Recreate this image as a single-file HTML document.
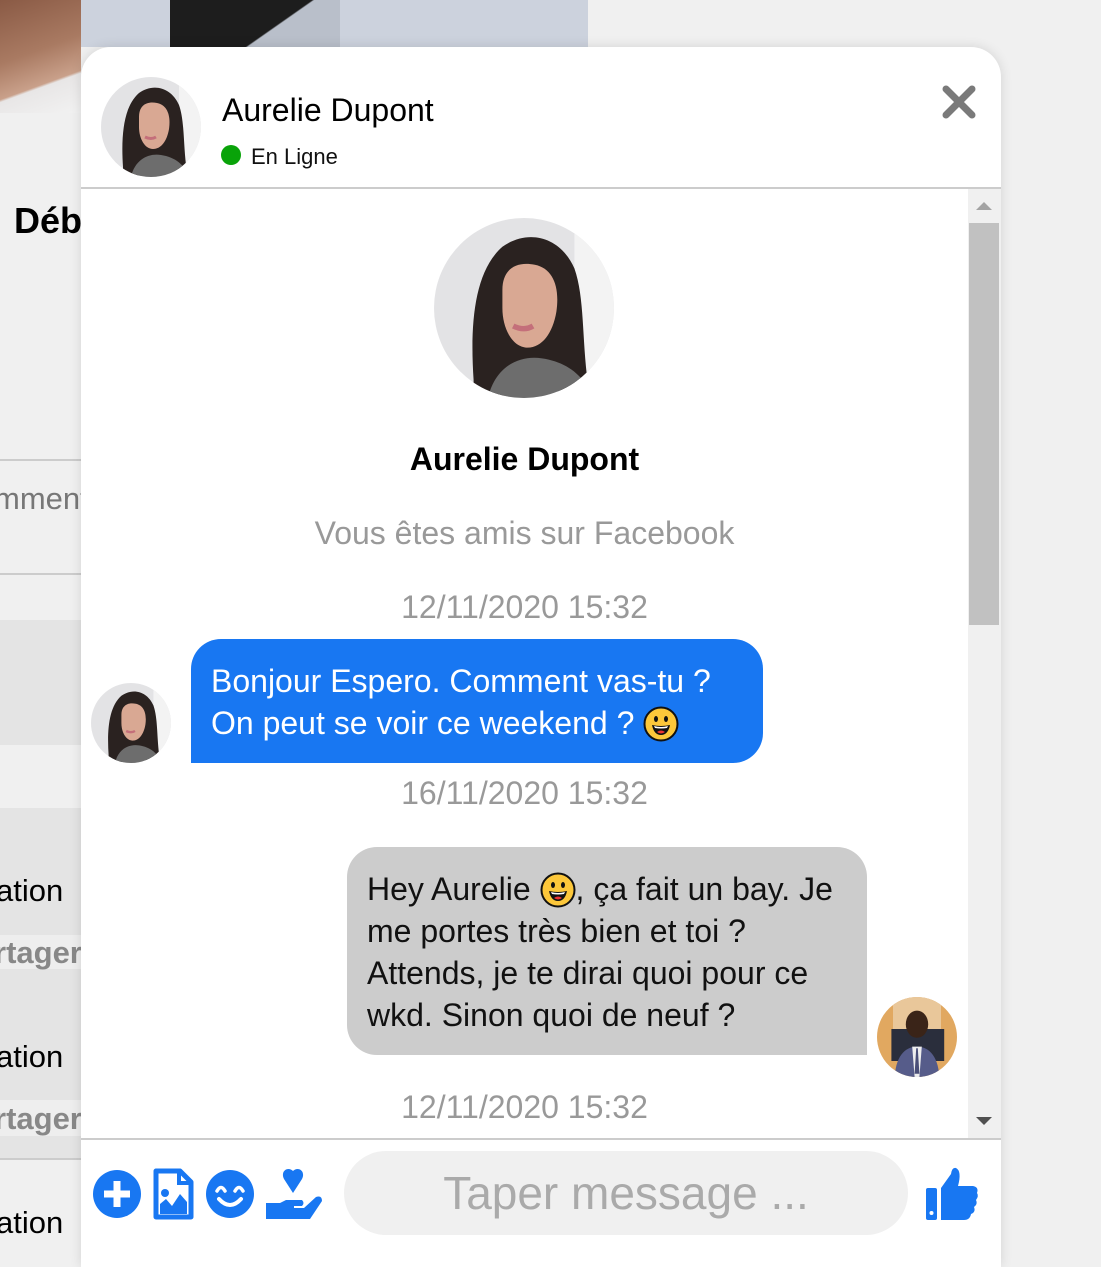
<!DOCTYPE html>
<html><head><meta charset="utf-8"><style>
*{margin:0;padding:0;box-sizing:border-box}
body{width:1101px;height:1247px;overflow:hidden;background:#f0f0f0;font-family:"Liberation Sans",Arial,sans-serif;position:relative}
.a{position:absolute}
.t{position:absolute;white-space:nowrap}
.c{text-align:center;left:81px;width:887px}
.bub{position:absolute;font-size:32px;line-height:42px;padding:21px 20px}
.emo{display:inline-block;vertical-align:-8px;width:36px;height:36px}
</style></head><body>
<div class="a" style="left:0;top:0;width:81px;height:113px;background:linear-gradient(160deg,#8a5a45 0%,#a97a62 45%,#c9a08a 70%,#e8e6e6 72%,#f2f2f2 100%)"></div>
<div class="a" style="left:81px;top:0;width:507px;height:47px;background:#ccd2dd"></div>
<div class="a" style="left:170px;top:0;width:170px;height:47px;background:linear-gradient(145deg,#1d1d1d 0 60%,#b9bfca 61%)"></div>
<div class="t" style="left:14px;top:200px;font-size:36px;font-weight:bold;color:#000">Déb</div>
<div class="a" style="left:0;top:459px;width:81px;height:2px;background:#ccc"></div>
<div class="t" style="left:-6px;top:481px;font-size:31px;color:#777">mmente</div>
<div class="a" style="left:0;top:573px;width:81px;height:2px;background:#ccc"></div>
<div class="a" style="left:0;top:620px;width:81px;height:125px;background:#e4e4e4"></div>
<div class="a" style="left:0;top:808px;width:81px;height:350px;background:#e4e4e4"></div>
<div class="a" style="left:0;top:935px;width:81px;height:34px;background:#eeeeee"></div>
<div class="a" style="left:0;top:1100px;width:81px;height:36px;background:#eeeeee"></div>
<div class="a" style="left:0;top:1158px;width:81px;height:2px;background:#ccc"></div>
<div class="t" style="left:-4px;top:873px;font-size:31px;color:#000">ation</div>
<div class="t" style="left:-6px;top:935px;font-size:31px;font-weight:bold;color:#888">rtager</div>
<div class="t" style="left:-4px;top:1039px;font-size:31px;color:#000">ation</div>
<div class="t" style="left:-6px;top:1101px;font-size:31px;font-weight:bold;color:#888">rtager</div>
<div class="t" style="left:-4px;top:1205px;font-size:31px;color:#000">ation</div>

<div class="a" style="left:81px;top:47px;width:920px;height:1220px;background:#fff;border-radius:30px 30px 0 0;box-shadow:0 0 12px rgba(0,0,0,.12)"></div>
<div class="a" style="left:81px;top:187px;width:920px;height:2px;background:#ccc"></div>

<svg width="0" height="0" style="position:absolute"><defs>
<clipPath id="cc2"><circle cx="50" cy="50" r="50"/></clipPath>
<symbol id="girl" viewBox="0 0 100 100"><g clip-path="url(#cc2)"><rect width="100" height="100" fill="#e3e3e5"/><rect x="78" width="22" height="100" fill="#f3f3f3"/>
<path d="M22 90 C20 60 22 30 38 16 C52 6 70 10 78 28 C84 45 82 70 86 95 L22 100Z" fill="#2a2220"/>
<path d="M38 40 C38 28 46 24 56 26 C66 28 70 38 68 52 C66 64 60 72 52 72 C44 72 38 62 38 50Z" fill="#d9a893"/>
<path d="M44 60 Q50 63 55 60" stroke="#c46f7a" stroke-width="3" fill="none"/>
<path d="M30 100 C34 82 48 76 60 78 C74 80 84 88 88 100Z" fill="#6d6d6d"/></g></symbol>
<symbol id="man" viewBox="0 0 100 100"><g clip-path="url(#cc2)"><rect width="100" height="100" fill="#e1a860"/><rect x="20" y="0" width="60" height="60" fill="#e9c79a"/><rect x="18" y="40" width="66" height="40" fill="#2a2e3c"/>
<ellipse cx="50" cy="34" rx="14" ry="17" fill="#3a2418"/><path d="M22 100 C24 70 38 62 50 62 C62 62 76 70 78 100Z" fill="#565c8a"/><path d="M44 62 L56 62 L53 100 L47 100Z" fill="#eee"/><path d="M49 64 L51 64 L53 96 L47 96Z" fill="#4a4f78"/></g></symbol>
<symbol id="emo" viewBox="0 0 36 36"><circle cx="18" cy="18" r="16.5" fill="#fcc73a" stroke="#111" stroke-width="2"/><ellipse cx="13" cy="13" rx="2" ry="3" fill="#111"/><ellipse cx="23" cy="13" rx="2" ry="3" fill="#111"/><path d="M9 19 Q18 21 27 19 Q25 29 18 29 Q11 29 9 19Z" fill="#111"/><path d="M11 20 Q18 22 25 20 L24 22 Q18 23 12 22Z" fill="#fff"/><path d="M14 26 Q18 23 22 26 Q18 29 14 26Z" fill="#e33"/></symbol>
</defs></svg>

<svg class="a" style="left:101px;top:77px" width="100" height="100"><use href="#girl"/></svg>
<div class="t" style="left:222px;top:92px;font-size:32px;color:#000">Aurelie Dupont</div>
<div class="a" style="left:221px;top:145px;width:20px;height:20px;border-radius:50%;background:#09a309"></div>
<div class="t" style="left:251px;top:144px;font-size:22px;color:#111">En Ligne</div>
<svg class="a" style="left:941px;top:84px" width="36" height="36" viewBox="0 0 36 36"><path d="M5 5 L31 31 M31 5 L5 31" stroke="#7a7a7a" stroke-width="7" stroke-linecap="round"/></svg>

<div class="a" style="left:968px;top:189px;width:33px;height:951px;background:#f0f0f0"></div>
<div class="a" style="left:969px;top:223px;width:30px;height:402px;background:#c1c1c1"></div>
<svg class="a" style="left:975px;top:200px" width="18" height="12"><path d="M1 10 L9 2 L17 10Z" fill="#a3a3a3"/></svg>
<svg class="a" style="left:975px;top:1115px" width="18" height="12"><path d="M1 2 L9 10 L17 2Z" fill="#505050"/></svg>

<svg class="a" style="left:434px;top:218px" width="180" height="180"><use href="#girl"/></svg>
<div class="t c" style="top:441px;font-size:32px;font-weight:bold;color:#000">Aurelie Dupont</div>
<div class="t c" style="top:515px;font-size:32px;color:#999">Vous êtes amis sur Facebook</div>
<div class="t c" style="top:589px;font-size:32px;color:#999">12/11/2020 15:32</div>

<svg class="a" style="left:91px;top:683px" width="80" height="80"><use href="#girl"/></svg>
<div class="bub" style="left:191px;top:639px;width:572px;height:124px;background:#1877f2;color:#fff;border-radius:30px 30px 30px 0">Bonjour Espero. Comment vas-tu ?<br>On peut se voir ce weekend ? <svg class="emo"><use href="#emo"/></svg></div>
<div class="t c" style="top:775px;font-size:32px;color:#999">16/11/2020 15:32</div>

<div class="bub" style="left:347px;top:847px;width:520px;height:208px;background:#cccccc;color:#111;border-radius:30px 30px 0 30px">Hey Aurelie <svg class="emo"><use href="#emo"/></svg>, ça fait un bay. Je<br>me portes très bien et toi ?<br>Attends, je te dirai quoi pour ce<br>wkd. Sinon quoi de neuf ?</div>
<svg class="a" style="left:877px;top:997px" width="80" height="80"><use href="#man"/></svg>
<div class="t c" style="top:1089px;font-size:32px;color:#999">12/11/2020 15:32</div>

<div class="a" style="left:81px;top:1138px;width:920px;height:2px;background:#ccc"></div>
<svg class="a" style="left:92px;top:1169px" width="50" height="50" viewBox="0 0 50 50"><circle cx="25" cy="25" r="24" fill="#1877f2"/><path d="M25 12 V38 M12 25 H38" stroke="#fff" stroke-width="7"/></svg>
<svg class="a" style="left:153px;top:1168px" width="41" height="52" viewBox="0 0 41 52"><path d="M3 3 H27 L38 14 V49 H3Z" fill="#fff" stroke="#1877f2" stroke-width="5" stroke-linejoin="round"/><path d="M26 4 V15 H37" fill="none" stroke="#1877f2" stroke-width="4"/><circle cx="12" cy="25" r="4" fill="#1877f2"/><path d="M7 46 V36 L13 31 L19 38 L27 26 L34 34 V46Z" fill="#1877f2"/></svg>
<svg class="a" style="left:205px;top:1169px" width="50" height="50" viewBox="0 0 50 50"><circle cx="25" cy="25" r="24" fill="#1877f2"/><path d="M12 22 Q16 15 20 22 M30 22 Q34 15 38 22" stroke="#fff" stroke-width="3.5" fill="none" stroke-linecap="round"/><path d="M14 30 Q25 42 36 30" stroke="#fff" stroke-width="4" fill="none" stroke-linecap="round"/></svg>
<svg class="a" style="left:264px;top:1167px" width="62" height="54" viewBox="0 0 62 54"><path d="M29 4 C24 -1 16 4 20 12 L29 26 L38 12 C42 4 34 -1 29 4Z" fill="#1877f2"/><path d="M2 36 H16 L22 33 H38 Q41 36 38 39 H30 V41 H40 L52 30 Q58 28 58 34 L46 52 H2Z" fill="#1877f2"/></svg>
<div class="a" style="left:344px;top:1151px;width:564px;height:84px;background:#f0f0f0;border-radius:42px"></div>
<div class="t" style="left:344px;width:564px;text-align:center;top:1166px;font-size:46px;color:#aaa">Taper message ...</div>
<svg class="a" style="left:924px;top:1166px" width="56" height="56" viewBox="0 0 56 56"><rect x="2" y="22" width="11" height="32" rx="2" fill="#1877f2"/><circle cx="7.5" cy="47" r="2" fill="#fff"/><path d="M17 22 L27 8 Q28 1 32 2 Q38 5 34 20 H49 Q55 21 53 27 Q55 30 52 34 Q54 38 50 41 Q52 46 47 48 Q46 54 40 54 H17Z" fill="#1877f2"/></svg>
</body></html>
